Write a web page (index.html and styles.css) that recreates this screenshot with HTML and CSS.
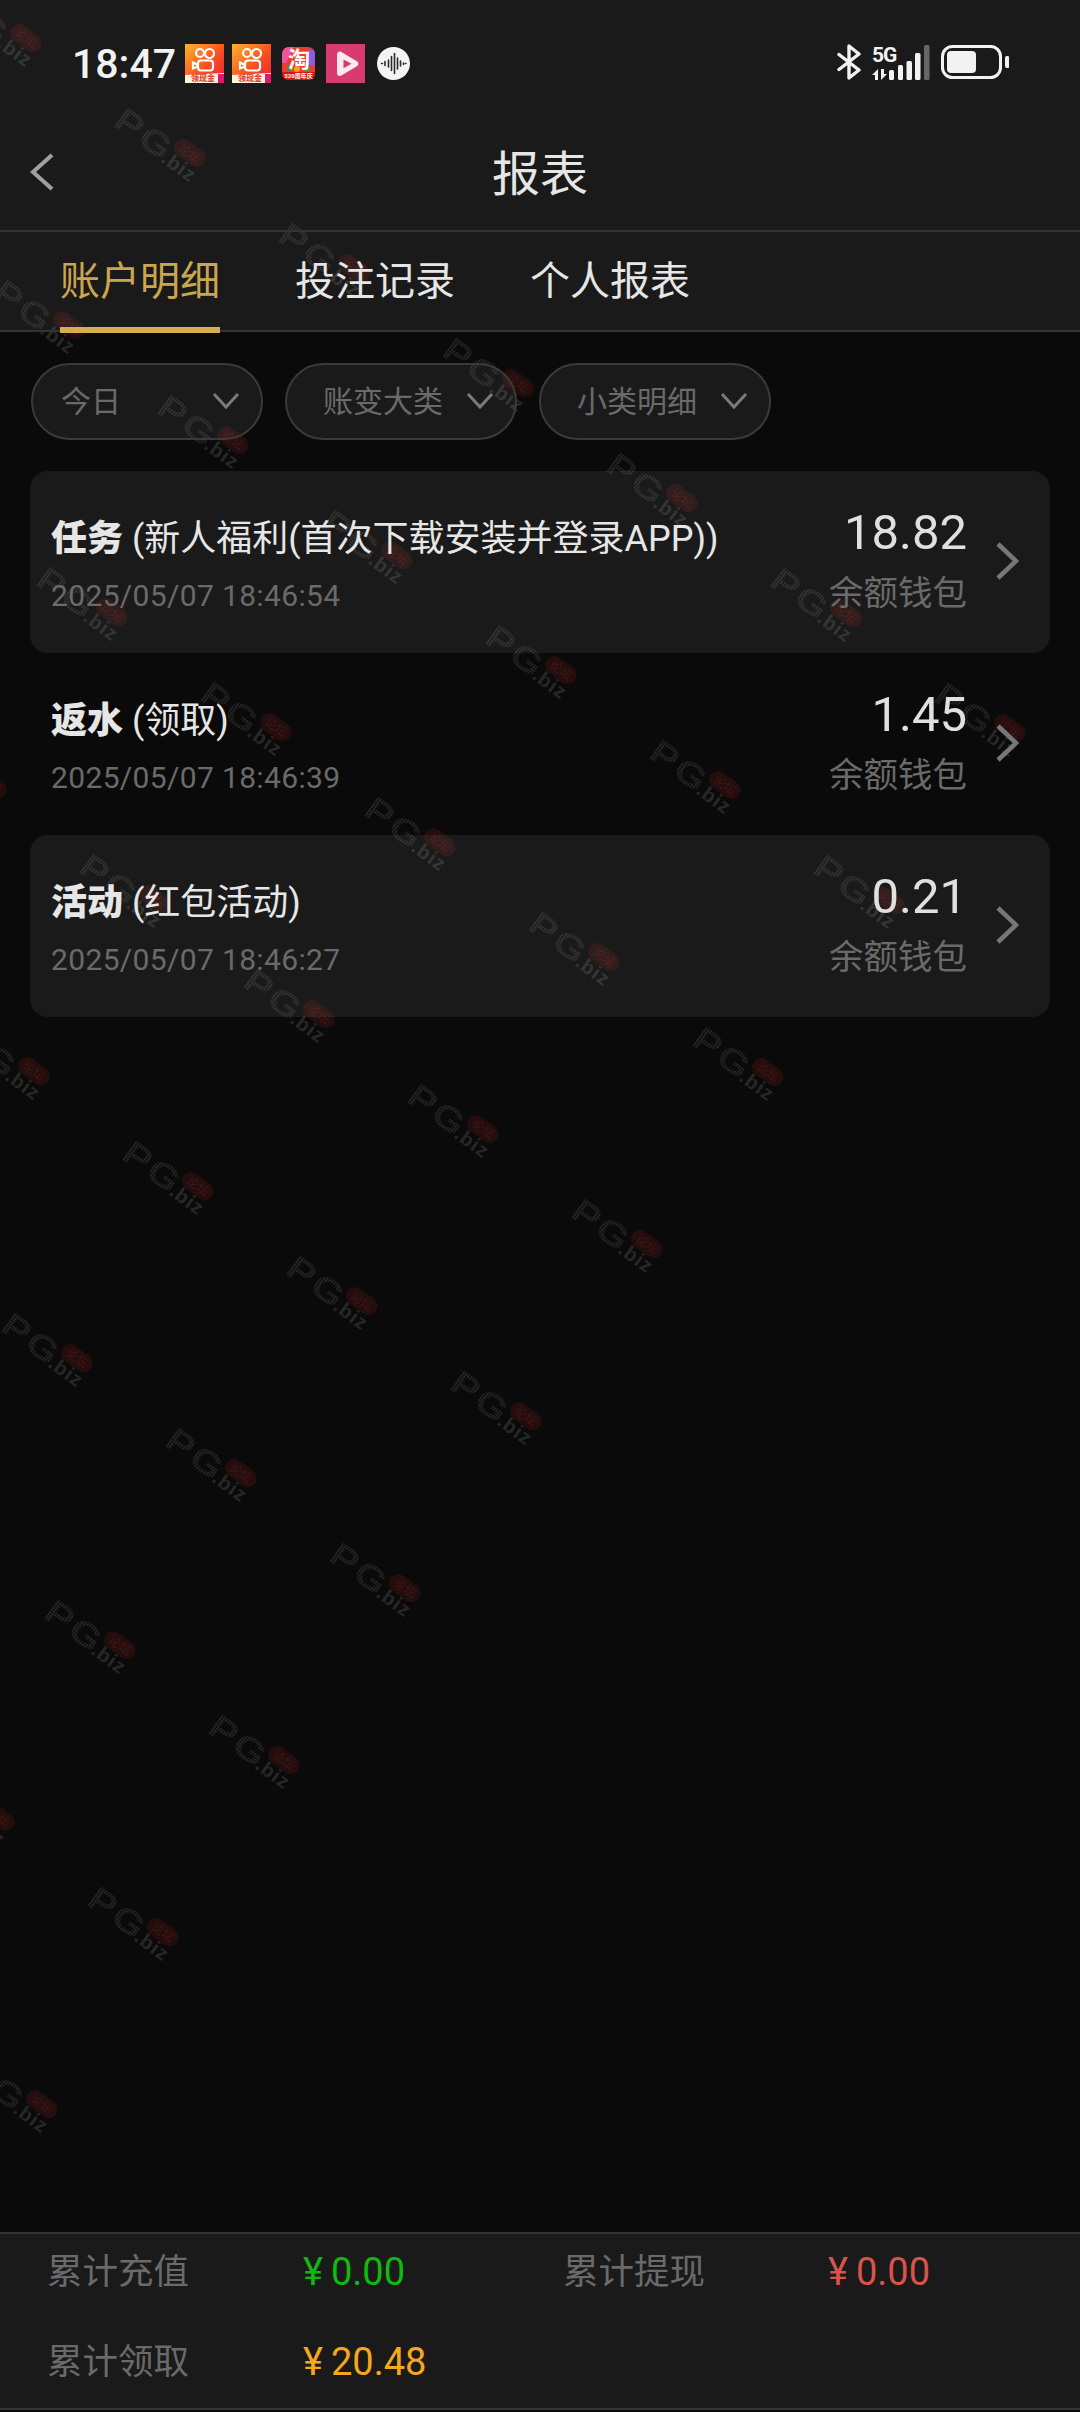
FILE: index.html
```html
<!DOCTYPE html>
<html lang="zh-CN">
<head>
    <meta charset="UTF-8">
    <meta name="viewport" content="width=device-width, initial-scale=1.0">
    <title>报表</title>
    <link rel="stylesheet" href="styles.css">
</head>
<body>
    <!-- Watermark tiles, sits behind the translucent panels -->
    <svg class="watermark" width="1080" height="2412" viewBox="0 0 1080 2412" aria-hidden="true">
        <defs>
            <pattern id="wmDots" width="2.4" height="2.4" patternUnits="userSpaceOnUse">
                <rect width="1.7" height="1.7" fill="#2a2a2a"/>
            </pattern>
            <g id="wm" transform="translate(-3 20) rotate(36)">
                <text class="wm-letters" transform="scale(1.2 1)" x="0" y="0" fill="url(#wmDots)">PG</text>
                <text class="wm-domain" x="60" y="1">.biz</text>
                <rect x="62" y="-32" width="35" height="18" rx="9" fill="#b01c1c" fill-opacity="0.16"/>
                <text class="wm-pill" x="79.5" y="-18.500">论坛</text>
            </g>
        </defs>
        <use href="#wm" x="-49" y="-10"/><use href="#wm" x="115" y="105"/><use href="#wm" x="279" y="220"/><use href="#wm" x="443" y="335"/><use href="#wm" x="607" y="450"/><use href="#wm" x="771" y="565"/><use href="#wm" x="935" y="680"/>
        <use href="#wm" x="-6" y="277"/><use href="#wm" x="158" y="392"/><use href="#wm" x="322" y="507"/><use href="#wm" x="486" y="622"/><use href="#wm" x="650" y="737"/><use href="#wm" x="814" y="852"/>
        <use href="#wm" x="37" y="564"/><use href="#wm" x="201" y="679"/><use href="#wm" x="365" y="794"/><use href="#wm" x="529" y="909"/><use href="#wm" x="693" y="1024"/>
        <use href="#wm" x="-84" y="736"/><use href="#wm" x="80" y="851"/><use href="#wm" x="244" y="966"/><use href="#wm" x="408" y="1081"/><use href="#wm" x="572" y="1196"/>
        <use href="#wm" x="-41" y="1023"/><use href="#wm" x="123" y="1138"/><use href="#wm" x="287" y="1253"/><use href="#wm" x="451" y="1368"/>
        <use href="#wm" x="2" y="1310"/><use href="#wm" x="166" y="1425"/><use href="#wm" x="330" y="1540"/>
        <use href="#wm" x="45" y="1597"/><use href="#wm" x="209" y="1712"/>
        <use href="#wm" x="-76" y="1769"/><use href="#wm" x="88" y="1884"/>
        <use href="#wm" x="-33" y="2056"/>
    </svg>

    <!-- Status bar + title -->
    <header class="top">
        <div class="status-bar">
            <span class="clock">18:47</span>
            <div class="notify-icons">
                <svg class="app-icon" width="39" height="39" viewBox="0 0 39 39">
                    <defs>
                        <linearGradient id="ksBg" x1="0" y1="0" x2="1" y2="1">
                            <stop offset="0" stop-color="#fdb52c"/>
                            <stop offset="0.55" stop-color="#f8501f"/>
                            <stop offset="1" stop-color="#ec1c3c"/>
                        </linearGradient>
                    </defs>
                    <rect width="39" height="39" fill="url(#ksBg)"/>
                    <g fill="none" stroke="#fff" stroke-width="2.200">
                        <circle cx="15" cy="9" r="4"/>
                        <circle cx="24.500" cy="9.500" r="4.500"/>
                        <rect x="13" y="16.500" width="15" height="10" rx="3"/>
                        <path d="M13 21l-5-2.500v6l5-2"/>
                    </g>
                    <path d="M0 31l39-2v10H0z" fill="#fdf3df"/>
                    <text class="ks-label" x="18" y="37">领现金</text>
                    <path d="M33 30h6v9h-6z" fill="#e01868"/>
                </svg>
                <svg class="app-icon" width="39" height="39" viewBox="0 0 39 39">
                    <rect width="39" height="39" fill="url(#ksBg)"/>
                    <g fill="none" stroke="#fff" stroke-width="2.200">
                        <circle cx="15" cy="9" r="4"/>
                        <circle cx="24.500" cy="9.500" r="4.500"/>
                        <rect x="13" y="16.500" width="15" height="10" rx="3"/>
                        <path d="M13 21l-5-2.500v6l5-2"/>
                    </g>
                    <path d="M0 31l39-2v10H0z" fill="#fdf3df"/>
                    <text class="ks-label" x="18" y="37">领现金</text>
                    <path d="M33 30h6v9h-6z" fill="#e01868"/>
                </svg>
                <svg class="app-icon icon-taobao" width="33" height="33" viewBox="0 0 33 33">
                    <defs>
                        <clipPath id="tbClip"><rect width="33" height="33" rx="7"/></clipPath>
                    </defs>
                    <g clip-path="url(#tbClip)">
                        <rect width="33" height="33" fill="#ee3b2b"/>
                        <path d="M0 0h12L4 16H0z" fill="#f0559c"/>
                        <path d="M26 3h7v15h-7z" fill="#8b5be0"/>
                        <path d="M0 25h33v8H0z" fill="#d41608"/>
                        <circle cx="15" cy="22" r="3" fill="#f7a21c"/>
                        <circle cx="8" cy="21" r="3" fill="#3f9a45"/>
                        <circle cx="25" cy="22" r="3" fill="#3f9a45"/>
                    </g>
                    <text class="tb-mark" x="17" y="20">淘</text>
                    <text class="tb-band" x="16.500" y="31">520周年庆</text>
                </svg>
                <svg class="app-icon" width="39" height="39" viewBox="0 0 39 39">
                    <rect width="39" height="39" fill="#d83a72"/>
                    <path d="M11 10.500c0-2.400 2.400-3.700 4.400-2.500l15.500 9.200c2 1.200 2 3.900 0 5.100L15.400 31.500c-2 1.200-4.400-.1-4.400-2.500z" fill="#fbe9f0"/>
                    <path d="M17.500 15.500l8 4.300-8 4.500z" fill="#d83a72"/>
                </svg>
                <svg class="app-icon icon-wave" width="33" height="33" viewBox="0 0 33 33">
                    <circle cx="16.500" cy="16.500" r="16.500" fill="#f4f4f4"/>
                    <path d="M4.500 16.500h1M8 14.500v4M11.500 13v7M14.500 9.500v14M17.500 6.500v20M20.500 11v11M23.500 14v5M26.500 16v1.500M28.500 16.500h.5" fill="none" stroke="#2a2a2a" stroke-width="1.600" stroke-linecap="round"/>
                </svg>
            </div>
            <div class="sys-icons">
                <svg width="24" height="36" viewBox="0 0 24 36">
                    <path d="M2 10.500l20 15.500-10 8V2l10 8L2 25.500" fill="none" stroke="#f2f2f2" stroke-width="3.400" stroke-linejoin="round" stroke-linecap="round"/>
                </svg>
                <svg width="58" height="40" viewBox="0 0 58 40">
                    <text class="net-label" x="0" y="20">5G</text>
                    <g transform="translate(0 3)" fill="#f2f2f2">
                        <path d="M6 24v11H3v-5H0zM9 35V24h3v5h3z"/>
                        <rect x="17" y="25" width="5" height="10" rx="1.500"/>
                        <rect x="26" y="20" width="5" height="15" rx="1.500"/>
                        <rect x="34.500" y="16" width="5.500" height="19" rx="1.500"/>
                        <rect x="43" y="8" width="5.500" height="27" rx="1.500"/>
                        <rect x="52" y="0" width="5.500" height="35" rx="1.500" fill="#666"/>
                    </g>
                </svg>
                <svg width="68" height="34" viewBox="0 0 68 34">
                    <rect x="1.500" y="1.500" width="58" height="31" rx="10" fill="none" stroke="#f2f2f2" stroke-width="3"/>
                    <rect x="6" y="6" width="29" height="22" rx="4" fill="#f2f2f2"/>
                    <rect x="64" y="11" width="4.500" height="12" rx="2" fill="#f2f2f2"/>
                </svg>
            </div>
        </div>
        <div class="title-bar">
            <svg class="back-icon" width="24" height="38" viewBox="0 0 24 38">
                <path d="M22 2L3 19l19 17" fill="none" stroke="#a0a0a0" stroke-width="4"/>
            </svg>
            <h1>报表</h1>
        </div>
    </header>

    <!-- Tabs -->
    <nav class="tabs">
        <a class="tab tab-active">账户明细</a>
        <a class="tab">投注记录</a>
        <a class="tab">个人报表</a>
    </nav>

    <!-- Filters -->
    <div class="filters">
        <div class="pill pill-short">
            <span>今日</span>
            <svg width="28" height="18" viewBox="0 0 28 18"><path d="M2 2l12 13L26 2" fill="none" stroke="#7a7a7a" stroke-width="3"/></svg>
        </div>
        <div class="pill">
            <span>账变大类</span>
            <svg width="28" height="18" viewBox="0 0 28 18"><path d="M2 2l12 13L26 2" fill="none" stroke="#7a7a7a" stroke-width="3"/></svg>
        </div>
        <div class="pill">
            <span>小类明细</span>
            <svg width="28" height="18" viewBox="0 0 28 18"><path d="M2 2l12 13L26 2" fill="none" stroke="#7a7a7a" stroke-width="3"/></svg>
        </div>
    </div>

    <!-- Records -->
    <main class="records">
        <div class="record record-odd">
            <div class="record-info">
                <p class="record-title"><strong>任务</strong> (新人福利(首次下载安装并登录APP))</p>
                <p class="record-date">2025/05/07 18:46:54</p>
            </div>
            <div class="record-money">
                <p class="record-amount">18.82</p>
                <p class="record-wallet">余额钱包</p>
            </div>
            <svg class="record-arrow" width="24" height="38" viewBox="0 0 24 38"><path d="M3 2l18 17L3 36" fill="none" stroke="#777" stroke-width="4.500"/></svg>
        </div>
        <div class="record">
            <div class="record-info">
                <p class="record-title"><strong>返水</strong> (领取)</p>
                <p class="record-date">2025/05/07 18:46:39</p>
            </div>
            <div class="record-money">
                <p class="record-amount">1.45</p>
                <p class="record-wallet">余额钱包</p>
            </div>
            <svg class="record-arrow" width="24" height="38" viewBox="0 0 24 38"><path d="M3 2l18 17L3 36" fill="none" stroke="#777" stroke-width="4.500"/></svg>
        </div>
        <div class="record record-odd">
            <div class="record-info">
                <p class="record-title"><strong>活动</strong> (红包活动)</p>
                <p class="record-date">2025/05/07 18:46:27</p>
            </div>
            <div class="record-money">
                <p class="record-amount">0.21</p>
                <p class="record-wallet">余额钱包</p>
            </div>
            <svg class="record-arrow" width="24" height="38" viewBox="0 0 24 38"><path d="M3 2l18 17L3 36" fill="none" stroke="#777" stroke-width="4.500"/></svg>
        </div>
    </main>

    <!-- Totals -->
    <footer class="totals">
        <span class="total-label">累计充值</span>
        <span class="total-value total-green"><i>¥</i>0.00</span>
        <span class="total-label">累计提现</span>
        <span class="total-value total-red"><i>¥</i>0.00</span>
        <span class="total-label">累计领取</span>
        <span class="total-value total-orange"><i>¥</i>20.48</span>
    </footer>
</body>
</html>
```

FILE: styles.css
```css
:root {
    --page: #0a0a0a;
    --panel: rgba(255, 255, 255, 0.065);
    --line: #333333;
    --text: #e6e6e6;
    --muted: #6a6a6a;
    --gold: #c9a64f;
}

* {
    margin: 0;
    padding: 0;
    box-sizing: border-box;
    font-family: Roboto, 'Noto Sans CJK SC', sans-serif;
}

html {
    background: var(--page);
}

body {
    width: 1080px;
    height: 2412px;
    display: flex;
    flex-direction: column;
    overflow: hidden;
    padding-bottom: 2px;
    color: var(--text);
}

/* Watermark */
.watermark {
    position: absolute;
    top: 0;
    left: 0;
    z-index: -1;
}

.wm-letters {
    font-family: 'Liberation Sans', sans-serif;
    font-size: 34px;
    font-weight: 700;
    letter-spacing: 2px;
}

.wm-domain {
    font-family: 'Liberation Sans', sans-serif;
    font-size: 20px;
    font-weight: 700;
    letter-spacing: 1px;
    fill: #272727;
}

.wm-pill {
    font-size: 12px;
    text-anchor: middle;
    fill: #401616;
}

/* Status bar */
.top {
    background: var(--panel);
    border-bottom: 2px solid var(--line);
}

.status-bar {
    height: 114px;
    padding: 44px 71px 0 72px;
    display: flex;
    align-items: flex-start;
}

.clock {
    width: 113px;
    height: 40px;
    line-height: 40px;
    font-size: 41px;
    font-weight: 500;
    color: #f2f2f2;
}

.notify-icons {
    display: flex;
    align-items: center;
    gap: 8px;
    height: 39px;
}

.app-icon {
    flex: none;
}

.icon-taobao {
    margin: 0 3px;
}

.icon-wave {
    margin-left: 4px;
}

.ks-label {
    font-size: 8px;
    font-weight: 700;
    text-anchor: middle;
    fill: #d8301c;
}

.tb-mark {
    font-size: 22px;
    font-weight: 700;
    text-anchor: middle;
    fill: #fff;
}

.tb-band {
    font-size: 6px;
    font-weight: 700;
    text-anchor: middle;
    fill: #fff;
}

.sys-icons {
    margin-left: auto;
    display: flex;
    align-items: center;
    gap: 11px;
    height: 36px;
}

.net-label {
    font-size: 21px;
    font-weight: 700;
    fill: #f2f2f2;
    letter-spacing: -1px;
}

/* Title */
.title-bar {
    height: 116px;
    position: relative;
    display: flex;
    align-items: center;
    justify-content: center;
}

.title-bar h1 {
    margin-bottom: 5px;
    font-size: 48px;
    font-weight: 400;
    color: var(--text);
}

.back-icon {
    position: absolute;
    left: 30px;
    top: 39px;
}

/* Tabs */
.tabs {
    height: 100px;
    padding-left: 60px;
    display: flex;
    gap: 75px;
    background: var(--panel);
    border-bottom: 2px solid var(--line);
}

.tab {
    position: relative;
    padding-top: 1px;
    line-height: 98px;
    font-size: 40px;
    color: var(--text);
}

.tab-active {
    color: var(--gold);
}

.tab-active::after {
    content: "";
    position: absolute;
    left: 0;
    right: 0;
    bottom: -3px;
    height: 6px;
    background: #d4ae50;
}

/* Filters */
.filters {
    margin-top: 31px;
    padding: 0 31px;
    display: flex;
    gap: 22px;
}

.pill {
    width: 232px;
    height: 77px;
    padding: 0 21px 0 36px;
    display: flex;
    align-items: center;
    justify-content: space-between;
    background: var(--panel);
    border: 2px solid #3a3a3a;
    border-radius: 39px;
    font-size: 30px;
    color: var(--muted);
}

.pill span {
    margin-bottom: 6px;
}

.pill svg {
    margin-bottom: 2px;
}

.pill-short {
    padding-left: 28px;
}

/* Records */
.records {
    margin: 31px 30px 0;
}

.record {
    height: 182px;
    padding: 0 31px 0 21px;
    display: flex;
    align-items: flex-start;
    border-radius: 18px;
}

.record-odd {
    background: var(--panel);
}

.record-info {
    padding-top: 42px;
}

.record-title {
    line-height: 52px;
    font-size: 36px;
    color: var(--text);
}

.record-title strong {
    font-weight: 900;
}

.record-date {
    margin-top: 10px;
    line-height: 42px;
    font-size: 30px;
    letter-spacing: 0.35px;
    color: var(--muted);
}

.record-money {
    margin-left: auto;
    padding-top: 34px;
    text-align: right;
}

.record-amount {
    line-height: 56px;
    font-size: 49px;
    font-weight: 400;
    color: #e0e0e0;
}

.record-wallet {
    margin-top: 9px;
    line-height: 46px;
    font-size: 34.5px;
    color: var(--muted);
}

.record-arrow {
    flex: none;
    align-self: center;
    margin: 0 0 2px 28px;
}

/* Totals */
.totals {
    margin-top: auto;
    padding: 18px 0 26px 47px;
    display: grid;
    grid-template-columns: 256px 260px 265px 1fr;
    row-gap: 50px;
    background: var(--panel);
    border-top: 2px solid var(--line);
    border-bottom: 2px solid var(--line);
}

.total-label {
    line-height: 40px;
    font-size: 35.5px;
    color: var(--muted);
}

.total-value {
    line-height: 40px;
    font-size: 38px;
}

.total-value i {
    margin-right: 8px;
    font-style: normal;
}

.total-green {
    color: #10b910;
}

.total-red {
    color: #d9534a;
}

.total-orange {
    color: #f5a81c;
}
```
